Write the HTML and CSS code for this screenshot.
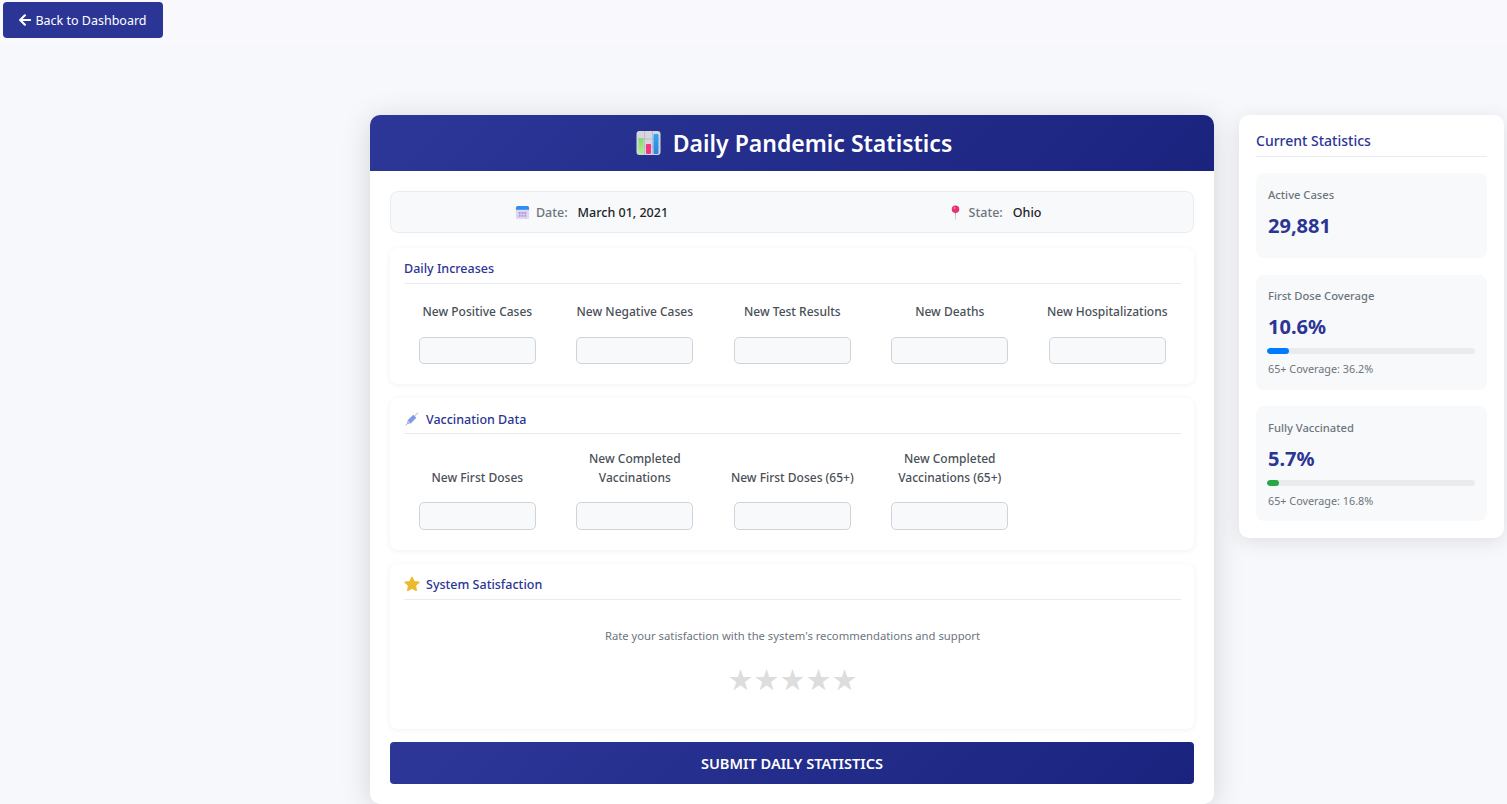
FILE: index.html
```html
<!DOCTYPE html>
<html lang="en">
<head>
  <meta charset="UTF-8">
  <meta name="viewport" content="width=device-width, initial-scale=1.0">
  <title>Daily Pandemic Statistics</title>
  <link rel="stylesheet" href="styles.css">
</head>
<body>
  <div class="topbar">
    <a class="back-btn" href="#">
      <svg class="back-icon" viewBox="0 0 448 512"><path fill="currentColor" d="M257.5 445.1l-22.2 22.2c-9.4 9.4-24.6 9.4-33.9 0L7 273c-9.4-9.4-9.4-24.6 0-33.9L201.4 44.7c9.4-9.4 24.6-9.4 33.9 0l22.2 22.2c9.5 9.5 9.3 25-.4 34.3L136.6 216H424c13.3 0 24 10.7 24 24v32c0 13.3-10.7 24-24 24H136.6l120.5 114.8c9.8 9.3 10 24.8.4 34.3z"/></svg>
      Back to Dashboard
    </a>
  </div>

  <div class="layout">
    <main class="card">
      <header class="card-header">
        <svg class="header-icon" viewBox="0 0 24 24">
          <defs>
            <linearGradient id="barGreen" x1="0" y1="0" x2="0" y2="1"><stop offset="0" stop-color="#7fdc6a"/><stop offset="1" stop-color="#b4ec8e"/></linearGradient>
            <linearGradient id="barPink" x1="0" y1="0" x2="0" y2="1"><stop offset="0" stop-color="#f5327c"/><stop offset="1" stop-color="#e8407f"/></linearGradient>
            <linearGradient id="barBlue" x1="0" y1="0" x2="0" y2="1"><stop offset="0" stop-color="#2fa8f0"/><stop offset="1" stop-color="#2f86e0"/></linearGradient>
          </defs>
          <rect x="0" y="0" width="24" height="24" rx="3" fill="#d6d5e0"/>
          <path d="M8 0v24M16 0v24M0 8h24M0 16h24" stroke="#b7b6c6" stroke-width="0.8"/>
          <rect x="2" y="7" width="5" height="16" rx="1" fill="url(#barGreen)"/>
          <rect x="9.5" y="13" width="5" height="10" rx="1" fill="url(#barPink)"/>
          <rect x="17" y="3" width="5" height="20" rx="1" fill="url(#barBlue)"/>
        </svg>
        <h1>Daily Pandemic Statistics</h1>
      </header>

      <form class="card-body">
        <div class="info-bar">
          <div class="info-item">
            <svg class="info-icon" viewBox="0 0 16 16">
              <rect x="1" y="1" width="14" height="14" rx="2" fill="#ded6f2"/>
              <path d="M1 5V3a2 2 0 0 1 2-2h10a2 2 0 0 1 2 2v2z" fill="#2e8df0"/>
              <path d="M4 7.5h2v2H4zM7 7.5h2v2H7zM10 7.5h2v2h-2zM4 10.5h2v2H4zM7 10.5h2v2H7zM10 10.5h2v2h-2z" fill="#a79bd8"/>
            </svg>
            <span class="info-label">Date:</span>
            <span class="info-value">March 01, 2021</span>
          </div>
          <div class="info-item">
            <svg class="info-icon" viewBox="0 0 16 16">
              <path d="M7.4 8h1.2L8.2 16h-.4z" fill="#b5b5bd"/>
              <circle cx="8" cy="4.5" r="4" fill="#e8336f"/>
              <circle cx="6.8" cy="3.2" r="1" fill="#f88aae"/>
            </svg>
            <span class="info-label">State:</span>
            <span class="info-value">Ohio</span>
          </div>
        </div>

        <section class="panel panel-daily">
          <h2 class="panel-title">Daily Increases</h2>
          <div class="field-grid">
            <div class="field"><label>New Positive Cases</label><input type="text"></div>
            <div class="field"><label>New Negative Cases</label><input type="text"></div>
            <div class="field"><label>New Test Results</label><input type="text"></div>
            <div class="field"><label>New Deaths</label><input type="text"></div>
            <div class="field"><label>New Hospitalizations</label><input type="text"></div>
          </div>
        </section>

        <section class="panel panel-vacc">
          <h2 class="panel-title">
            <svg class="title-icon syringe-icon" viewBox="0 0 16 16">
              <path d="M3 9.5 9.5 3l3.5 3.5L6.500 13z" fill="#7f9be8"/>
              <path d="M3 9.5 6.500 13 3 14 2 13z" fill="#a9bcf0"/>
              <path d="M11 4.500 15 .8" stroke="#c3c9d6" stroke-width="1.300"/>
              <path d="M2.500 13.500.8 15.200" stroke="#9aa2b5" stroke-width="1"/>
            </svg>
            Vaccination Data
          </h2>
          <div class="field-grid">
            <div class="field"><label>New First Doses</label><input type="text"></div>
            <div class="field"><label>New Completed Vaccinations</label><input type="text"></div>
            <div class="field"><label>New First Doses (65+)</label><input type="text"></div>
            <div class="field"><label>New Completed Vaccinations (65+)</label><input type="text"></div>
          </div>
        </section>

        <section class="panel panel-rating">
          <h2 class="panel-title">
            <svg class="title-icon" viewBox="0 0 16 16">
              <path d="M8 1.300l2.100 4.400 4.800.6-3.500 3.300.9 4.800L8 12.100l-4.300 2.300.9-4.800L1.100 6.300l4.800-.6z" fill="#edb92e" stroke="#edb92e" stroke-width="1.400" stroke-linejoin="round"/>
            </svg>
            System Satisfaction
          </h2>
          <p class="rating-text">Rate your satisfaction with the system's recommendations and support</p>
          <div class="stars">
            <span>★</span><span>★</span><span>★</span><span>★</span><span>★</span>
          </div>
        </section>

        <button class="submit-btn" type="button">SUBMIT DAILY STATISTICS</button>
      </form>
    </main>

    <aside class="sidebar">
      <h3 class="sidebar-title">Current Statistics</h3>

      <div class="stat stat-active">
        <div class="stat-label">Active Cases</div>
        <div class="stat-value">29,881</div>
      </div>

      <div class="stat">
        <div class="stat-label">First Dose Coverage</div>
        <div class="stat-value">10.6%</div>
        <div class="bar"><div class="bar-fill bar-blue" style="width: 10.6%"></div></div>
        <div class="stat-note">65+ Coverage: 36.2%</div>
      </div>

      <div class="stat">
        <div class="stat-label">Fully Vaccinated</div>
        <div class="stat-value">5.7%</div>
        <div class="bar"><div class="bar-fill bar-green" style="width: 5.7%"></div></div>
        <div class="stat-note">65+ Coverage: 16.8%</div>
      </div>
    </aside>
  </div>
</body>
</html>
```

FILE: styles.css
```css
* {
  box-sizing: border-box;
}
body {
  font-family: "Noto Sans", "Open Sans", sans-serif;
  background-color: #f7f8fc;
  margin: 0;
  height: 804px;
  overflow: hidden;
  color: #333;
}
.topbar {
  height: 44px;
  padding: 2px 0 0 3px;
  background-color: #f9f9fd;
}
.back-btn {
  display: flex;
  align-items: center;
  justify-content: center;
  gap: 4px;
  width: 160px;
  height: 36px;
  background-color: #2b3595;
  color: #fff;
  font-size: 12.500px;
  text-decoration: none;
  border-radius: 4px;
}
.back-icon {
  width: 12px;
  height: 14px;
}
.layout {
  display: flex;
  align-items: flex-start;
  gap: 25px;
  margin: 71px 0 0 370px;
}
.card {
  width: 844px;
  flex: none;
  background-color: #fff;
  border-radius: 10px;
  box-shadow: 0 4px 30px rgba(0, 0, 0, 0.15);
  overflow: hidden;
}
.card-header {
  display: flex;
  align-items: center;
  justify-content: center;
  gap: 12px;
  height: 56px;
  padding-left: 4px;
  color: #fff;
  background: linear-gradient(135deg, #2d3798, #1a237e);
}
.card-header h1 {
  margin: 0;
  font-size: 23px;
  font-weight: 600;
}
.header-icon {
  width: 25px;
  height: 24px;
}
.card-body {
  padding: 20px;
}
.info-bar {
  display: grid;
  grid-template-columns: 1fr 1fr;
  height: 42px;
  background-color: #f8f9fa;
  border: 1px solid #e9ecef;
  border-radius: 8px;
  margin-bottom: 15px;
}
.info-item {
  display: flex;
  align-items: center;
  justify-content: center;
  font-size: 12.500px;
}
.info-item + .info-item {
  padding-left: 4px;
}
.info-icon {
  width: 15px;
  height: 15px;
  margin-right: 6px;
}
.info-label {
  color: #6c757d;
  font-weight: 500;
  margin-right: 10px;
}
.info-value {
  color: #212529;
  font-weight: 500;
}
.panel {
  background-color: #fff;
  border-radius: 8px;
  box-shadow: 0 1px 6px rgba(0, 0, 0, 0.06);
  padding: 11px 13px 20px 14px;
  margin-bottom: 14px;
}
.panel-rating {
  height: 165px;
  margin-bottom: 13px;
}
.panel-title {
  display: flex;
  align-items: center;
  gap: 6px;
  margin: 0 0 15px;
  height: 25px;
  padding-bottom: 6px;
  border-bottom: 1px solid #e9ecef;
  color: #2b3595;
  font-size: 12.500px;
  font-weight: 500;
}
.panel-vacc .panel-title {
  padding-bottom: 4px;
}
.panel-daily .panel-title {
  margin-bottom: 18px;
}
.title-icon {
  width: 16px;
  height: 16px;
}
.syringe-icon {
  width: 14px;
  height: 14px;
  margin: 0 1px;
}
.field-grid {
  display: grid;
  grid-template-columns: repeat(5, 1fr);
  gap: 20px;
  padding: 0 5px 0 4.600px;
}
.field {
  display: flex;
  flex-direction: column;
  align-items: center;
  justify-content: flex-end;
}
.field label {
  font-size: 12px;
  line-height: 19px;
  font-weight: 500;
  color: #495057;
  text-align: center;
  margin-bottom: 15px;
}
.field input {
  width: 117px;
  height: 28px;
  background-color: #f8f9fa;
  border: 1px solid #ced4da;
  border-radius: 5px;
}
.panel-daily .field label {
  margin-bottom: 16px;
}
.panel-daily .field input {
  height: 27px;
}
.rating-text {
  margin: 28px 0 19px;
  text-align: center;
  font-size: 11.250px;
  color: #6c757d;
}
.stars {
  display: flex;
  justify-content: center;
  font-family: "DejaVu Sans", sans-serif;
  font-size: 29px;
  line-height: 36px;
  color: #ddd;
}
.submit-btn {
  display: block;
  width: 100%;
  height: 42px;
  border: none;
  border-radius: 4px;
  color: #fff;
  font-family: inherit;
  font-size: 14.600px;
  font-weight: 600;
  background: linear-gradient(135deg, #2d3798, #1a237e);
}
.sidebar {
  width: 265px;
  flex: none;
  background-color: #fff;
  border-radius: 10px;
  box-shadow: 0 4px 20px rgba(0, 0, 0, 0.1);
  padding: 16px 17px 17px;
}
.sidebar-title {
  margin: 0 0 16px;
  height: 26px;
  border-bottom: 1px solid #e9ecef;
  color: #2b3595;
  font-size: 14px;
  font-weight: 500;
}
.stat {
  background-color: #f8f9fa;
  border-radius: 8px;
  padding: 12px 12px 14px;
  margin-bottom: 16px;
}
.stat:last-child {
  margin-bottom: 0;
  padding: 13px 12px 13px;
}
.stat-active {
  height: 85px;
  padding-top: 13px;
  margin-bottom: 17px;
}
.stat-label {
  font-size: 11.200px;
  font-weight: 500;
  line-height: 18px;
  color: #6c757d;
}
.stat-value {
  margin-top: 8px;
  font-size: 20px;
  line-height: 27px;
  font-weight: 700;
  color: #2b3595;
}
.bar {
  height: 6px;
  margin: 8px 0 0 -1px;
  background-color: #e9ecef;
  border-radius: 3px;
  overflow: hidden;
}
.bar-fill {
  height: 100%;
  border-radius: 3px;
}
.bar-blue {
  background-color: #007bff;
}
.bar-green {
  background-color: #28a745;
}
.stat-note {
  margin-top: 7px;
  font-size: 10.800px;
  line-height: 15px;
  color: #6c757d;
}
```
